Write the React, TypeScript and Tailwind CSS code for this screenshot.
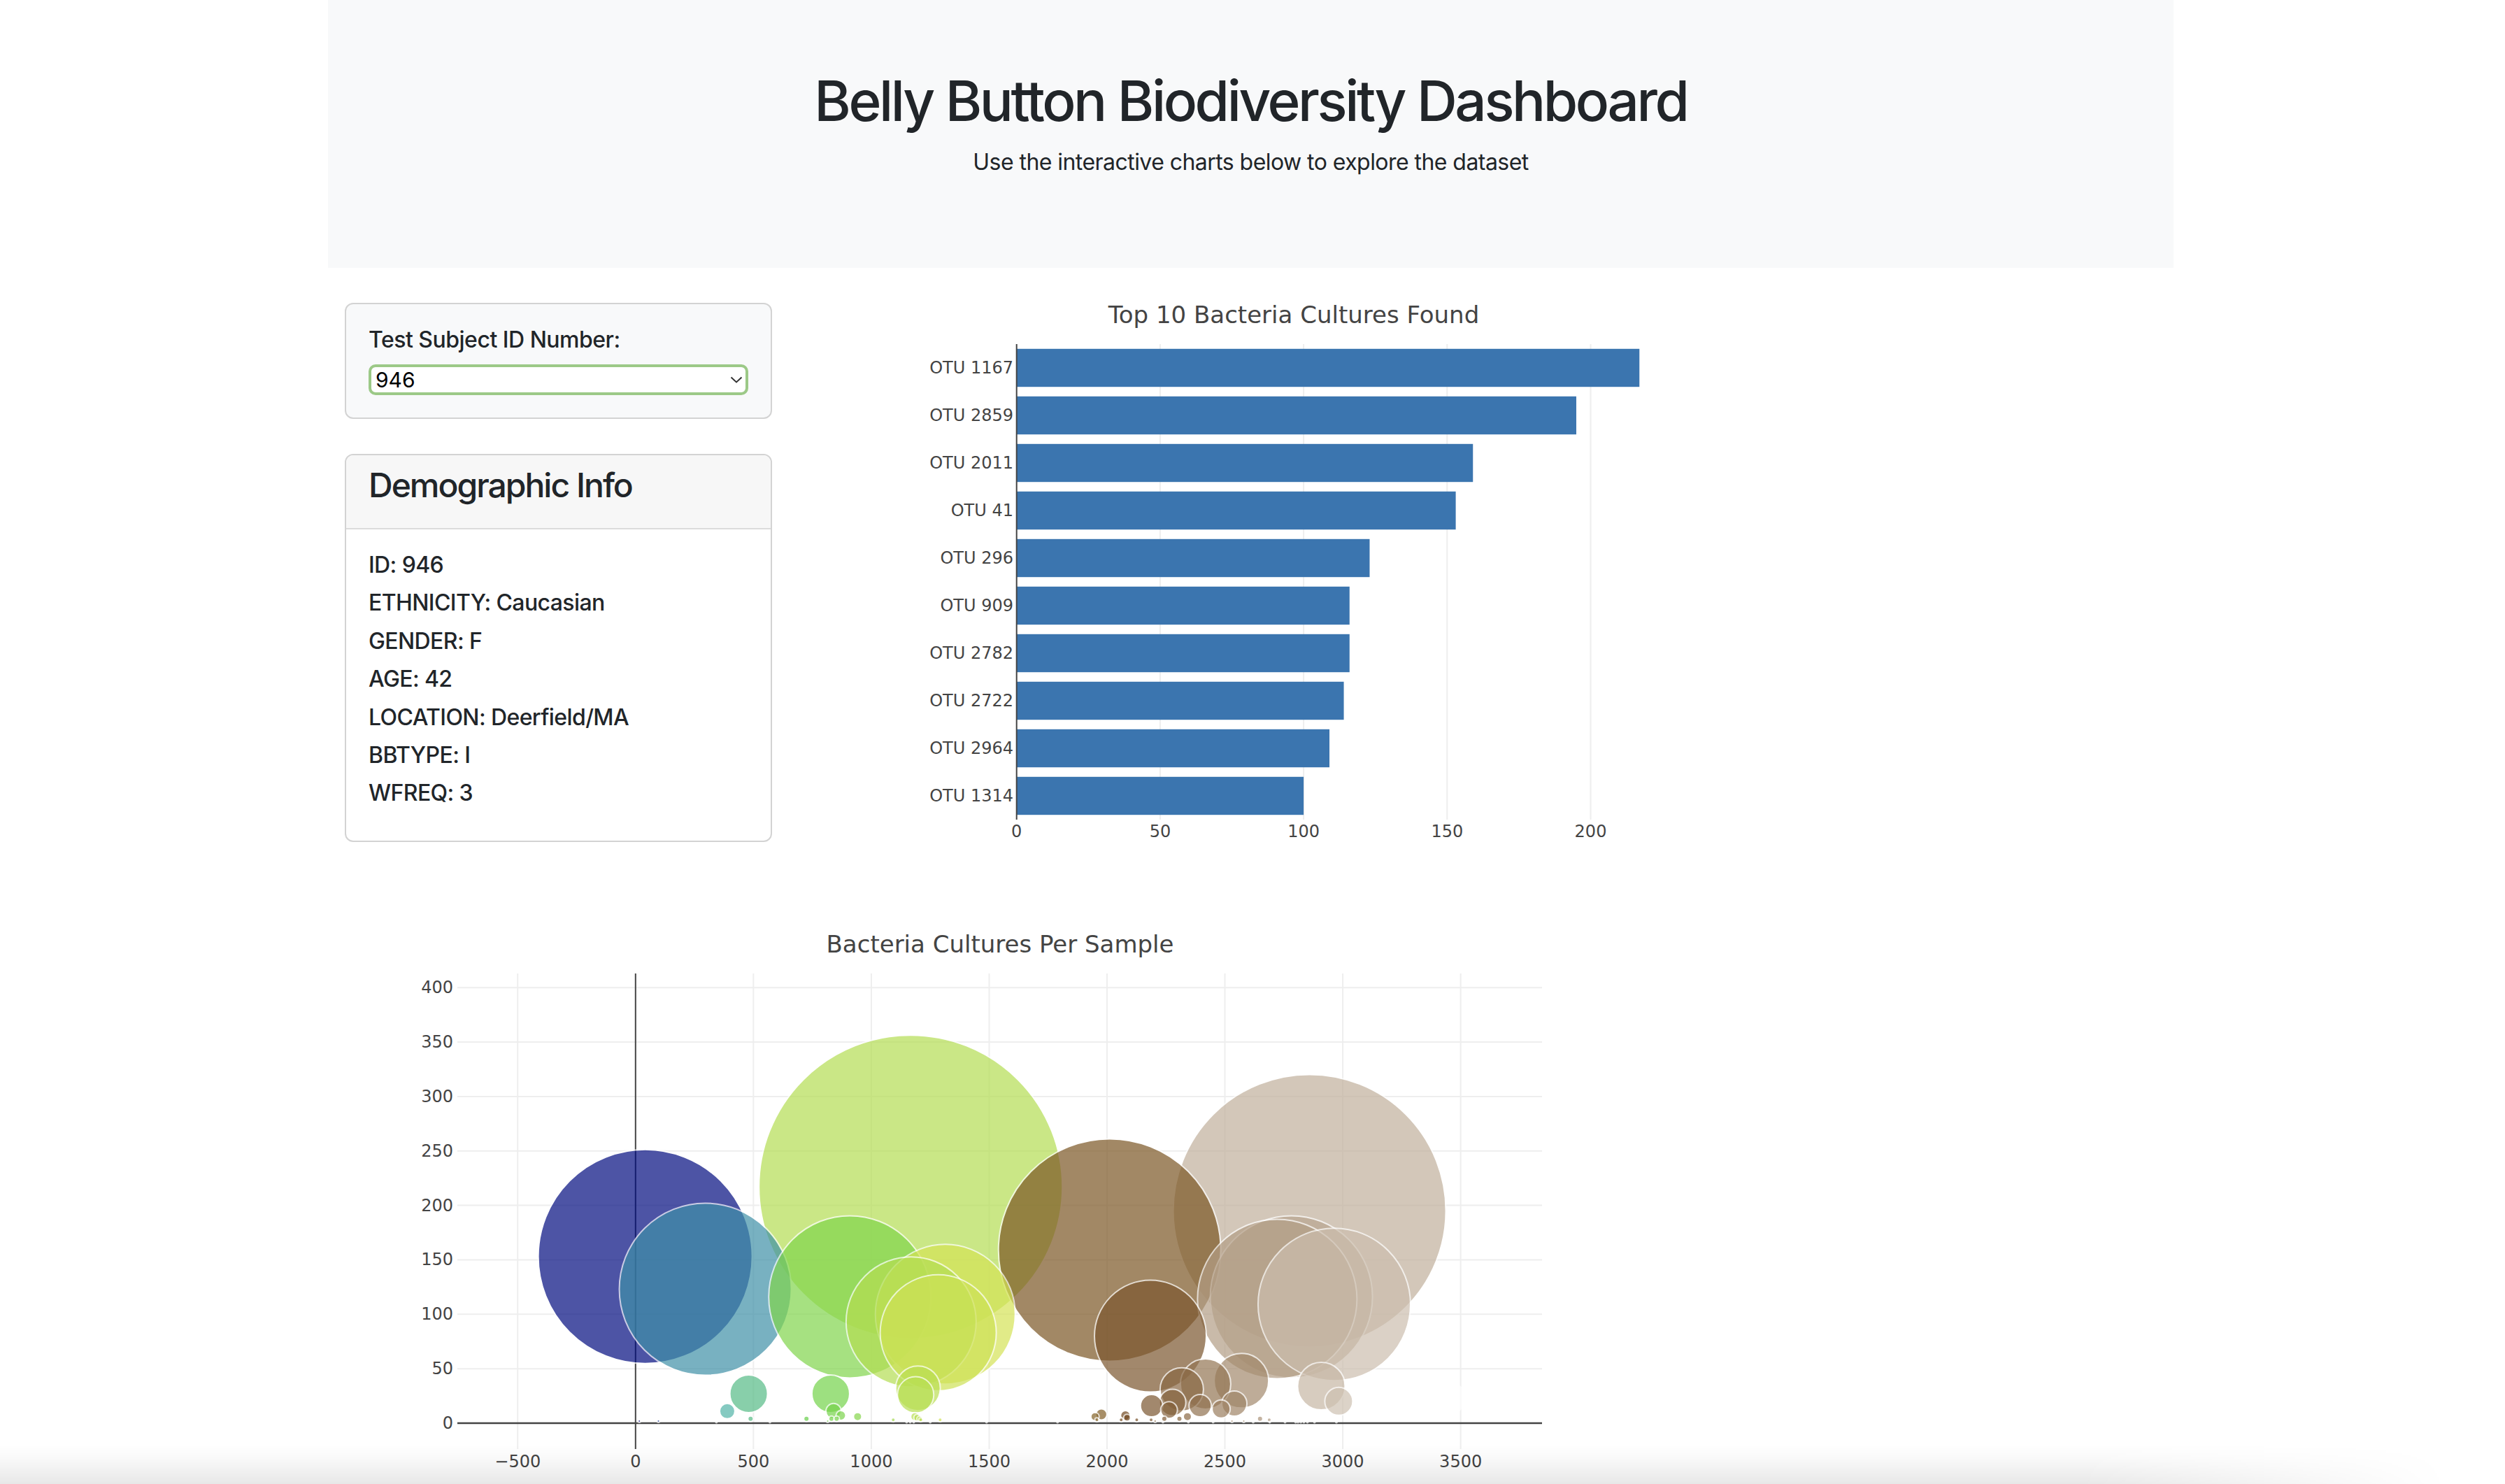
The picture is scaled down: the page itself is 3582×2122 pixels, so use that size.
import React from "react";

// top 10 for the bar chart, top to bottom
const topTen = [
  { label: "OTU 1167", value: 217 },
  { label: "OTU 2859", value: 195 },
  { label: "OTU 2011", value: 159 },
  { label: "OTU 41", value: 153 },
  { label: "OTU 296", value: 123 },
  { label: "OTU 909", value: 116 },
  { label: "OTU 2782", value: 116 },
  { label: "OTU 2722", value: 114 },
  { label: "OTU 2964", value: 109 },
  { label: "OTU 1314", value: 100 },
];

// [otu_id, sample_value] in draw order (largest first)
const samples: [number, number][] = [
  [1167, 217], [2859, 195], [2011, 159], [41, 153], [296, 123], [909, 116],
  [2782, 116], [2722, 114], [2964, 109], [1314, 100], [1169, 93], [1284, 83],
  [2184, 80], [2570, 39], [2418, 36], [2909, 34], [1198, 32], [2317, 31],
  [480, 27], [828, 27], [1188, 26], [3450, 23], [2983, 20], [2278, 19],
  [2540, 18], [2189, 16], [2395, 16], [2484, 13], [2263, 12], [389, 11],
  [840, 11], [1976, 8], [871, 7], [2078, 7], [1949, 6], [942, 6], [2341, 6],
  [1185, 6], [2085, 5], [1195, 5], [725, 4], [488, 4], [831, 4], [853, 4],
  [2243, 4], [2307, 4], [2649, 4], [1205, 4], [1093, 3], [1292, 3], [1957, 3],
  [2060, 3], [2126, 3], [2187, 3], [2688, 3], [1210, 3], [16, 2], [97, 2],
  [815, 2], [2204, 2], [2530, 2], [2580, 2], [343, 1], [570, 1], [1150, 1],
  [1165, 1], [1180, 1], [1250, 1], [1489, 1], [1790, 1], [2237, 1], [2345, 1],
  [2450, 1], [2620, 1], [2690, 1], [2755, 1], [2800, 1], [2810, 1], [2822, 1],
  [2835, 1], [2850, 1], [2880, 1], [2973, 1],
];

const metadata = [
  "ID: 946",
  "ETHNICITY: Caucasian",
  "GENDER: F",
  "AGE: 42",
  "LOCATION: Deerfield/MA",
  "BBTYPE: I",
  "WFREQ: 3",
];

// plotly fell back to verdana in the capture; DejaVu Sans has the same widths
const plotFont = "'DejaVu Sans', verdana, sans-serif";

// screenshot was taken on a P3 display, so shift sRGB colours the same way
function toP3(r: number, g: number, b: number) {
  const lin = (c: number) => {
    c /= 255;
    return c <= 0.04045 ? c / 12.92 : Math.pow((c + 0.055) / 1.055, 2.4);
  };
  const enc = (c: number) => {
    c = Math.min(1, Math.max(0, c));
    return Math.round(255 * (c <= 0.0031308 ? 12.92 * c : 1.055 * Math.pow(c, 1 / 2.4) - 0.055));
  };
  const R = lin(r), G = lin(g), B = lin(b);
  return `rgb(${enc(0.8225 * R + 0.1774 * G)},${enc(0.0332 * R + 0.9669 * G)},${enc(0.0171 * R + 0.0724 * G + 0.9108 * B)})`;
}

// plotly "Earth" colorscale
const earthStops: [number, number[]][] = [
  [0, [0, 0, 130]],
  [0.1, [0, 180, 180]],
  [0.2, [40, 210, 40]],
  [0.4, [230, 230, 50]],
  [0.6, [120, 70, 20]],
  [1, [255, 255, 255]],
];

function earth(t: number) {
  for (let i = 1; i < earthStops.length; i++) {
    const [t1, c1] = earthStops[i];
    const [t0, c0] = earthStops[i - 1];
    if (t <= t1) {
      const f = (t - t0) / (t1 - t0);
      return toP3(
        c0[0] + (c1[0] - c0[0]) * f,
        c0[1] + (c1[1] - c0[1]) * f,
        c0[2] + (c1[2] - c0[2]) * f
      );
    }
  }
  return "rgb(255,255,255)";
}

function BarChart() {
  const x0 = 298.7;
  const k = 4.104;
  const top0 = 79;
  return (
    <svg width={1300} height={820} className="block shrink-0 ml-[51px] mt-[-20px]">
      <text x={695} y={49} textAnchor="middle" fontSize={34} fill="#444" fontFamily={plotFont}>
        Top 10 Bacteria Cultures Found
      </text>
      {[50, 100, 150, 200].map((v) => (
        <line key={v} x1={x0 + v * k} x2={x0 + v * k} y1={top0} y2={top0 + 680} stroke="#eee" strokeWidth={2} />
      ))}
      {topTen.map((b, i) => {
        const top = top0 + 68 * i;
        return (
          <g key={b.label}>
            <rect x={x0} y={top + 6.8} width={b.value * k} height={54.4} fill={toP3(31, 119, 180)} />
            <text x={294} y={top + 42} textAnchor="end" fontSize={24} fill="#444" fontFamily={plotFont}>
              {b.label}
            </text>
          </g>
        );
      })}
      <line x1={x0} x2={x0} y1={top0} y2={top0 + 680} stroke="#444" strokeWidth={2} />
      {[0, 50, 100, 150, 200].map((v) => (
        <text key={v} x={x0 + v * k} y={784} textAnchor="middle" fontSize={24} fill="#444" fontFamily={plotFont}>
          {v}
        </text>
      ))}
    </svg>
  );
}

function BubbleChart() {
  const xs = (id: number) => 415.8 + 0.3371 * id;
  const ys = (v: number) => 745 - 1.557 * v;
  const ids = samples.map((s) => s[0]);
  const cmin = Math.min(...ids);
  const cmax = Math.max(...ids);
  const xTicks = [-500, 0, 500, 1000, 1500, 2000, 2500, 3000, 3500];
  const yTicks = [0, 50, 100, 150, 200, 250, 300, 350, 400];
  return (
    <svg width={1800} height={832} className="block ml-[24px] mt-[57px]">
      <text x={937} y={72} textAnchor="middle" fontSize={34} fill="#444" fontFamily={plotFont}>
        Bacteria Cultures Per Sample
      </text>
      {xTicks.filter((t) => t !== 0).map((t) => (
        <line key={t} x1={xs(t)} x2={xs(t)} y1={102} y2={782} stroke="#eee" strokeWidth={2} />
      ))}
      {yTicks.filter((t) => t !== 0).map((t) => (
        <line key={t} x1={161} x2={1712} y1={ys(t)} y2={ys(t)} stroke="#eee" strokeWidth={2} />
      ))}
      <line x1={xs(0)} x2={xs(0)} y1={102} y2={782} stroke="#444" strokeWidth={2} />
      <line x1={161} x2={1712} y1={ys(0)} y2={ys(0)} stroke="#444" strokeWidth={2.5} />
      {samples.map(([id, v], i) => (
        <circle
          key={i}
          cx={xs(id)}
          cy={ys(v)}
          r={Math.max(v, 1)}
          fill={earth((id - cmin) / (cmax - cmin))}
          stroke="#fff"
          strokeWidth={2}
          opacity={0.7}
        />
      ))}
      {yTicks.map((t) => (
        <text key={t} x={155} y={ys(t) + 8} textAnchor="end" fontSize={24} fill="#444" fontFamily={plotFont}>
          {t}
        </text>
      ))}
      {xTicks.map((t) => (
        <text key={t} x={xs(t)} y={808} textAnchor="middle" fontSize={24} fill="#444" fontFamily={plotFont}>
          {t < 0 ? `\u2212${Math.abs(t)}` : t}
        </text>
      ))}
    </svg>
  );
}

export default function App() {
  return (
    <div className="relative min-h-[2122px] overflow-hidden bg-white text-[#212529] font-[Inter,'Liberation_Sans',sans-serif]">
      <div className="mx-auto w-[2644px]">
        {/* Header */}
        <div className="w-[2639px] h-[383px] bg-[#f8f9fa] pt-[96px] text-center">
          <h1 className="text-[80px] leading-[96px] font-medium tracking-[-3.4px]">
            Belly Button Biodiversity Dashboard
          </h1>
          <p className="mt-[16px] text-[32px] leading-[48px] tracking-[-0.55px]">
            Use the interactive charts below to explore the dataset
          </p>
        </div>

        {/* Selector, demographics and bar chart */}
        <div className="flex mt-[50px]">
          <div className="ml-[24px] w-[611px] shrink-0">
            <div className="border-2 border-[#d3d3d3] rounded-[12px] bg-[#f8f9fa] p-8">
              <h6 className="text-[32px] leading-[38.4px] font-medium tracking-[-0.5px] mb-4">
                Test Subject ID Number:
              </h6>
              <div className="h-[44px] border-4 border-[#9cc987] rounded-[10px] bg-white flex items-center justify-between pl-[6px] pr-[4px]">
                <span className="text-[30px] leading-none text-black">946</span>
                <svg width="18" height="10" viewBox="0 0 18 10">
                  <path d="M1.5 1.5l7.5 7 7.5-7" fill="none" stroke="#333" strokeWidth="2" />
                </svg>
              </div>
            </div>

            <div className="mt-[50px] border-2 border-[#d3d3d3] rounded-[12px] overflow-hidden bg-white">
              <div className="bg-[#f7f7f7] border-b-2 border-[#dcdcdc] px-8 pt-[14px] pb-[32px]">
                <h4 className="text-[48px] leading-[57.6px] font-medium tracking-[-2px]">Demographic Info</h4>
              </div>
              <div className="p-8">
                {metadata.map((line) => (
                  <h6 key={line} className="text-[32px] leading-[38.4px] font-medium tracking-[-0.6px] mb-4">
                    {line}
                  </h6>
                ))}
              </div>
            </div>
          </div>

          <BarChart />
        </div>

        <BubbleChart />
      </div>

      {/* faint shadow along the bottom edge of the capture */}
      <div className="pointer-events-none absolute left-0 bottom-0 w-[3500px] h-[56px] bg-linear-to-b from-black/0 via-black/[0.025] via-35% to-black/[0.09] [mask-image:linear-gradient(to_right,black_85%,transparent)]" />
    </div>
  );
}
